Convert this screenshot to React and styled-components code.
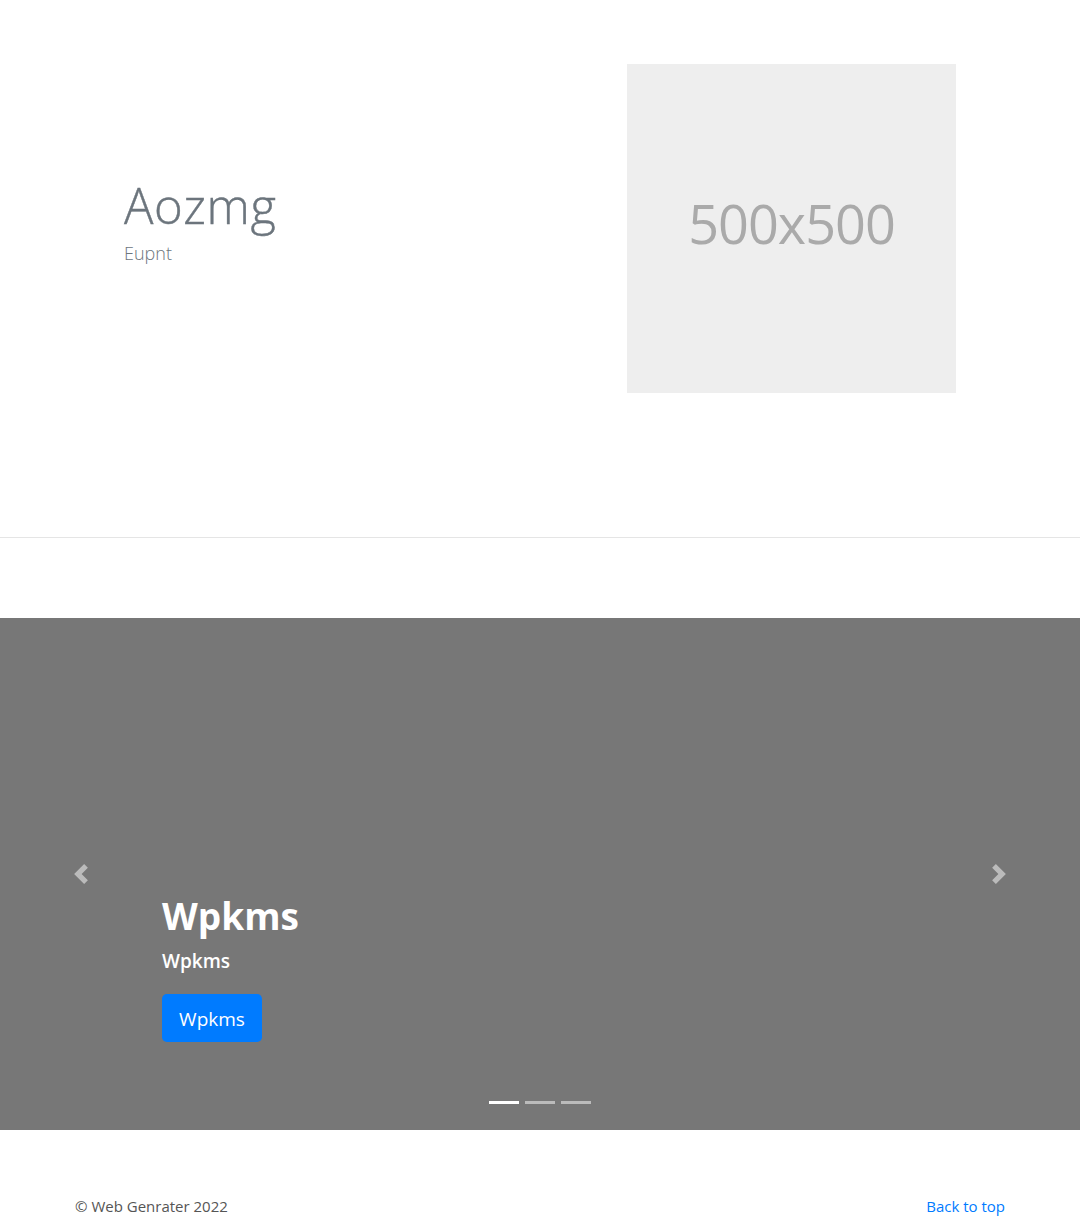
import React from "react";
import styled, { createGlobalStyle } from "styled-components";

const Global = createGlobalStyle`
  * { box-sizing: border-box; }
  html, body { margin: 0; padding: 0; background: #fff; }
  body {
    font-family: "Open Sans", "Noto Sans", "Liberation Sans", sans-serif;
    font-size: 16px;
    line-height: 1.5;
    color: #212529;
  }
`;

const Main = styled.main`
  display: flex;
  flex-direction: column;
`;

const Featurette = styled.section`
  width: 960px;
  margin: 0 auto;
  padding: 64px 64px 144px;
  display: flex;
  align-items: center;
  justify-content: space-between;
`;

const Intro = styled.div`
  display: flex;
  flex-direction: column;
  margin-bottom: 16px;
`;

const Heading = styled.h2`
  margin: 0 0 8px;
  font-size: 49px;
  font-weight: 300;
  line-height: 56px;
  letter-spacing: 0.6px;
  color: #6c757d;
  -webkit-text-stroke: 0.4px #6c757d;
`;

const Lead = styled.p`
  margin: 0;
  font-size: 18px;
  font-weight: 300;
  line-height: 24px;
  color: #6c757d;
`;

const Placeholder = styled.div`
  width: 329px;
  height: 329px;
  background: #eeeeee;
  display: flex;
  align-items: center;
  justify-content: center;
  color: #aaaaaa;
  font-size: 54px;
  font-weight: 400;
  letter-spacing: -1px;
  padding-bottom: 10px;
`;

const Divider = styled.hr`
  width: 100%;
  margin: 0 0 80px;
  border: 0;
  border-top: 1px solid #e5e5e5;
`;

const Carousel = styled.div`
  position: relative;
  height: 512px;
  background: #777777;
  display: flex;
  align-items: stretch;
  justify-content: space-between;
`;

const Control = styled.button`
  width: 15%;
  border: 0;
  background: transparent;
  padding: 0;
  display: flex;
  align-items: center;
  justify-content: center;
  opacity: 0.5;
  cursor: pointer;
  svg { width: 20px; height: 20px; display: block; }
`;

const Caption = styled.div`
  flex: 1;
  display: flex;
  flex-direction: column;
  justify-content: flex-end;
  padding-bottom: 88px;
  color: #fff;
`;

const CaptionTitle = styled.h1`
  margin: 0 0 8px;
  font-size: 37px;
  font-weight: 700;
  line-height: 1.2;
`;

const CaptionText = styled.p`
  margin: 0 0 19px;
  font-size: 19px;
  font-weight: 600;
  line-height: 1.5;
`;

const Button = styled.a`
  align-self: flex-start;
  display: inline-block;
  background: #007bff;
  color: #fff;
  text-decoration: none;
  font-size: 19px;
  font-weight: 500;
  line-height: 30px;
  padding: 10px 16px 8px;
  border-radius: 4.8px;
  width: 100px;
  text-align: center;
`;

const Indicators = styled.ol`
  position: absolute;
  left: 0;
  right: 0;
  bottom: 16px;
  margin: 0;
  padding: 0;
  list-style: none;
  display: flex;
  justify-content: center;
`;

const Indicator = styled.li`
  width: 30px;
  height: 3px;
  margin: 10px 3px;
  background: #fff;
  opacity: ${(p) => (p.$active ? 1 : 0.5)};
`;

const Footer = styled.footer`
  width: 960px;
  margin: 64px auto 0;
  padding: 0 15px;
  display: flex;
  justify-content: space-between;
  font-size: 15px;
  line-height: 24px;
`;

const Copy = styled.p`
  margin: 0;
  color: #555;
`;

const TopLink = styled.a`
  color: #007bff;
  text-decoration: none;
`;

const Prev = () => (
  <svg viewBox="0 0 8 8" fill="#fff">
    <path d="M5.25 0l-4 4 4 4 1.5-1.5L4.25 4l2.5-2.5L5.25 0z" />
  </svg>
);

const Next = () => (
  <svg viewBox="0 0 8 8" fill="#fff">
    <path d="M2.75 0l-1.5 1.5L3.75 4l-2.5 2.5L2.75 8l4-4-4-4z" />
  </svg>
);

export default function App() {
  return (
    <>
      <Global />
      <Main>
        <Featurette>
          <Intro>
            <Heading>Aozmg</Heading>
            <Lead>Eupnt</Lead>
          </Intro>
          <Placeholder>500x500</Placeholder>
        </Featurette>
        <Divider />
        <Carousel>
          <Control aria-label="Previous"><Prev /></Control>
          <Caption>
            <CaptionTitle>Wpkms</CaptionTitle>
            <CaptionText>Wpkms</CaptionText>
            <Button href="#">Wpkms</Button>
          </Caption>
          <Control aria-label="Next"><Next /></Control>
          <Indicators>
            <Indicator $active />
            <Indicator />
            <Indicator />
          </Indicators>
        </Carousel>
        <Footer>
          <Copy>© Web Genrater 2022</Copy>
          <TopLink href="#">Back to top</TopLink>
        </Footer>
      </Main>
    </>
  );
}
